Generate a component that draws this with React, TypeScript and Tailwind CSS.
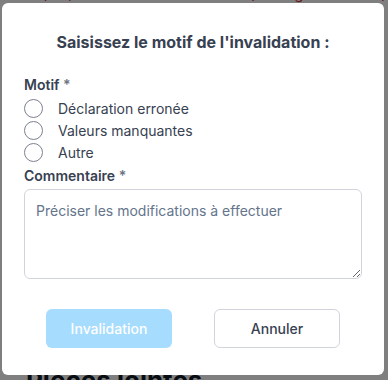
export default function App() {
  return (
    <div
      className="relative w-[388px] h-[380px] overflow-hidden bg-white"
      style={{ fontFamily: 'Inter, "Noto Sans", sans-serif' }}
    >
      {/* page behind the modal */}
      <div className="flex flex-col px-[26px]">
        <p className="-mt-[15px] h-[18px] text-[15px] leading-[18px] text-[#d32f2f] whitespace-nowrap">
          20/03/2025 - HUGON Thérèse (rôle : gestionnaire)
        </p>
        <div className="h-[362px]" />
        <h2 className="text-[26px] font-bold text-[#111827] whitespace-nowrap leading-[32px]">
          Pièces jointes
        </h2>
      </div>

      {/* overlay */}
      <div className="absolute inset-0 bg-black/50" />

      {/* modal */}
      <div className="absolute left-[2px] top-[3px] w-[382px] h-[372px] rounded-md bg-white flex flex-col px-[22px] pt-[27px] pb-[27px]">
        <h1 className="text-center text-[16px] leading-[24px] font-bold text-[#374151]">
          Saisissez le motif de l'invalidation :
        </h1>

        <p className="mt-[21px] text-[14px] leading-[20px] font-semibold text-[#374151]">
          Motif <span className="text-[#6b7280]">*</span>
        </p>

        <div className="mt-[2px] flex flex-col">
          {['Déclaration erronée', 'Valeurs manquantes', 'Autre'].map((label) => (
            <label key={label} className="flex items-center h-[22px] gap-[15px]">
              <span className="w-[19px] h-[19px] rounded-full border border-[#7b8190] bg-white" />
              <span className="text-[14px] text-[#374151]">{label}</span>
            </label>
          ))}
        </div>

        <p className="mt-[3px] text-[14px] leading-[20px] font-semibold text-[#374151]">
          Commentaire <span className="text-[#6b7280]">*</span>
        </p>

        <textarea
          className="mt-[3px] h-[90px] w-full rounded-md border border-[#d1d5db] px-[11px] py-[11px] text-[14px] leading-[20px] text-[#374151] placeholder:text-[#64748b] outline-none"
          placeholder="Préciser les modifications à effectuer"
        />

        <div className="mt-auto flex justify-center gap-[42px]">
          <button className="w-[126px] h-[39px] rounded-md bg-[#a6dcfd] text-white text-[14px] font-medium">
            Invalidation
          </button>
          <button className="w-[126px] h-[39px] rounded-md border border-[#d1d5db] bg-white text-[#374151] text-[14px] font-medium">
            Annuler
          </button>
        </div>
      </div>
    </div>
  );
}
